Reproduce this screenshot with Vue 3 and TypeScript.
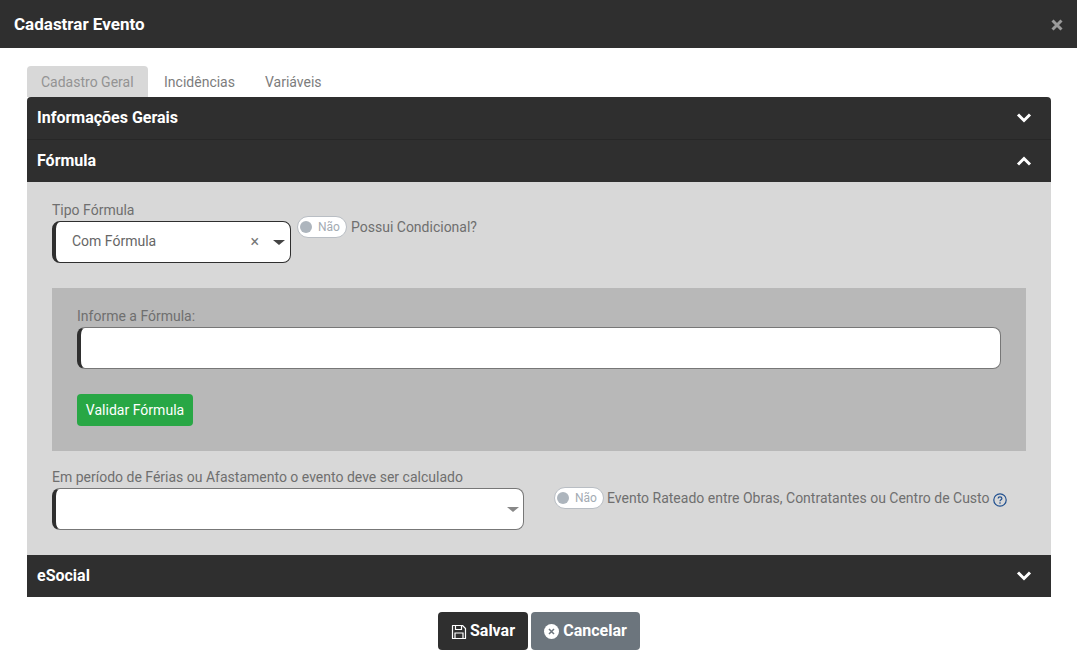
<script setup lang="ts">
const tabs: string[] = ['Cadastro Geral', 'Incidências', 'Variáveis']
</script>

<template>
  <div class="modal">
    <header class="modal-head">
      <h1>Cadastrar Evento</h1>
      <svg class="close" width="12" height="12" viewBox="0 0 12 12" aria-label="Fechar">
        <path d="M1.5 1.5 10.5 10.5M10.5 1.5 1.5 10.5" stroke="#9b9b9b" stroke-width="3" fill="none" />
      </svg>
    </header>

    <main class="modal-body">
      <nav class="tabs">
        <span v-for="(t, i) in tabs" :key="t" class="tab" :class="{ active: i === 0 }">{{ t }}</span>
      </nav>

      <section class="accordion">
        <div class="acc-head first">
          <span>Informações Gerais</span>
          <svg class="chev" width="16" height="11" viewBox="0 0 16 11"><path d="M2 2.5 8 8.5 14 2.5" stroke="#fff" stroke-width="3" fill="none" /></svg>
        </div>
        <div class="acc-head second">
          <span>Fórmula</span>
          <svg class="chev up" width="16" height="11" viewBox="0 0 16 11"><path d="M2 8.5 8 2.5 14 8.5" stroke="#fff" stroke-width="3" fill="none" /></svg>
        </div>

        <div class="panel">
          <div class="row row-top">
            <div class="field short">
              <label>Tipo Fórmula</label>
              <div class="control">
                <span class="value">Com Fórmula</span>
                <span class="clear">×</span>
                <span class="caret dark"></span>
              </div>
            </div>
            <div class="switch-line first-switch">
              <span class="switch"><i></i><b>Não</b></span>
              <span class="switch-text">Possui Condicional?</span>
            </div>
          </div>

          <div class="formula-box">
            <label>Informe a Fórmula:</label>
            <div class="control"></div>
            <button class="validate" type="button">Validar Fórmula</button>
          </div>

          <div class="row row-bottom">
            <div class="field long">
              <label>Em período de Férias ou Afastamento o evento deve ser calculado</label>
              <div class="control"><span class="caret"></span></div>
            </div>
            <div class="switch-line second-switch">
              <span class="switch"><i></i><b>Não</b></span>
              <span class="switch-text">Evento Rateado entre Obras, Contratantes ou Centro de Custo</span>
              <svg class="help" width="14" height="14" viewBox="0 0 14 14">
                <circle cx="7" cy="7" r="6.2" fill="none" stroke="#1f4f8f" stroke-width="1.2" />
                <path d="M5.1 5.6C5.1 4.5 6 3.9 7 3.9S8.9 4.5 8.9 5.5C8.9 6.8 7 6.8 7 8.2" fill="none" stroke="#1f4f8f" stroke-width="1.2" />
                <circle cx="7" cy="10" r=".8" fill="#1f4f8f" />
              </svg>
            </div>
          </div>
        </div>

        <div class="acc-head last">
          <span>eSocial</span>
          <svg class="chev" width="16" height="11" viewBox="0 0 16 11"><path d="M2 2.5 8 8.5 14 2.5" stroke="#fff" stroke-width="3" fill="none" /></svg>
        </div>
      </section>

      <footer class="actions">
        <button class="btn save" type="button">
          <svg width="16" height="16" viewBox="0 0 16 16">
            <path d="M1.5 1.5H11.5L14.5 4.5V14.5H1.5Z" fill="none" stroke="#fff" stroke-width="1.2" stroke-linejoin="round" />
            <path d="M4.5 1.5V5.5H10.5V1.5M4 14.5V9H12V14.5" fill="none" stroke="#fff" stroke-width="1.2" />
          </svg>
          Salvar
        </button>
        <button class="btn cancel" type="button">
          <svg width="15" height="15" viewBox="0 0 15 15">
            <circle cx="7.5" cy="7.5" r="7.5" fill="#fff" />
            <path d="M5 5 10 10M10 5 5 10" stroke="#6c757d" stroke-width="1.5" />
          </svg>
          Cancelar
        </button>
      </footer>
    </main>
  </div>
</template>

<style>
html, body { margin: 0; background: #fff; }
</style>

<style scoped>
.modal {
  width: 1077px;
  height: 652px;
  overflow: hidden;
  font-family: Roboto, "Liberation Sans", sans-serif;
  font-size: 14px;
  color: #6f6f6f;
}
.modal-head {
  height: 48px;
  background: #2f2f2f;
  display: flex;
  align-items: center;
  justify-content: space-between;
  padding: 0 14px;
}
.modal-head h1 {
  margin: 0 0 -1px;
  font-size: 17px;
  font-weight: 700;
  color: #fff;
  line-height: 1;
}
.close { margin-top: 2px; }
.modal-body { padding: 18px 26px 0 27px; }
.tabs { display: flex; height: 31px; }
.tab {
  padding: 0 15px;
  line-height: 32px;
  color: #7c7c7c;
  border-radius: 4px 4px 0 0;
}
.tab.active {
  background: #d8d8d8;
  color: #939393;
  padding: 0 14px;
  margin-right: 1.5px;
}
.accordion { display: flex; flex-direction: column; }
.acc-head {
  box-sizing: border-box;
  background: #2f2f2f;
  color: #fff;
  font-size: 16px;
  font-weight: 700;
  display: flex;
  align-items: center;
  justify-content: space-between;
  padding: 0 19px 1px 10px;
}
.acc-head.first { height: 43px; border-radius: 4px 4px 0 0; border-bottom: 1px solid #272727; }
.acc-head.second { height: 42px; }
.acc-head.last { height: 42px; }
.chev.up { margin-top: 2px; }
.panel {
  height: 373px;
  box-sizing: border-box;
  background: #d8d8d8;
  padding: 20px 25px 0;
}
.row { display: flex; }
label { display: block; line-height: 17px; margin-bottom: 2px; }
.control {
  position: relative;
  box-sizing: border-box;
  height: 42px;
  background: #fff;
  border: 1px solid #777;
  border-left: 4px solid #2f2f2f;
  border-radius: 8px;
  display: flex;
  align-items: center;
}
.short { width: 239px; }
.short .control { border-color: #2f2f2f; }
.long { width: 472px; }
.value { margin-left: 16px; margin-bottom: 2px; color: #666; flex: 1; }
.clear { color: #777; font-size: 16px; line-height: 1; margin-right: 14px; }
.caret {
  width: 0;
  height: 0;
  border-left: 6.5px solid transparent;
  border-right: 6.5px solid transparent;
  border-top: 5px solid #888;
  margin: 1px 4px 0 auto;
}
.caret.dark { border-top-color: #444; margin-left: 0; margin-right: 5px; }
.switch-line { display: flex; align-items: flex-start; }
.first-switch { margin: 14px 0 0 6px; }
.second-switch { margin: 18px 0 0 30px; }
.switch {
  box-sizing: border-box;
  width: 50px;
  height: 22px;
  border: 1px solid #b9bec4;
  border-radius: 11px;
  background: #fff;
  display: flex;
  align-items: center;
  padding-left: 1px;
  margin-right: 4px;
}
.second-switch .switch { margin-right: 3px; }
.switch i {
  width: 12px;
  height: 12px;
  margin-left: 1px;
  border-radius: 50%;
  background: #adb5bd;
}
.switch b {
  margin-left: 6px;
  font-size: 12px;
  font-weight: 400;
  color: #a3abb3;
}
.switch-text { line-height: 22px; }
.help { margin: 6px 0 0 3px; }
.formula-box {
  margin-top: 25px;
  height: 163px;
  box-sizing: border-box;
  background: #b8b8b8;
  padding: 20px 25px 0;
}
.validate {
  display: block;
  margin-top: 25px;
  width: 116px;
  height: 32px;
  padding: 0;
  border: 0;
  border-radius: 4px;
  background: #28a745;
  color: #fff;
  font: 400 14px Roboto, "Liberation Sans", sans-serif;
  letter-spacing: .02px;
}
.row-bottom { margin-top: 18px; }
.actions {
  display: flex;
  justify-content: center;
  gap: 3px;
  padding-top: 15px;
}
.btn {
  height: 38px;
  border: 0;
  border-radius: 4px;
  color: #fff;
  font: 700 16px Roboto, "Liberation Sans", sans-serif;
  display: flex;
  align-items: center;
  justify-content: center;
  gap: 4px;
  padding: 0 0 2px;
}
.save { gap: 3px; }
.btn svg { margin-top: 3px; }
.save { width: 90px; background: #2f2f2f; }
.cancel { width: 109px; background: #6c757d; }
</style>
